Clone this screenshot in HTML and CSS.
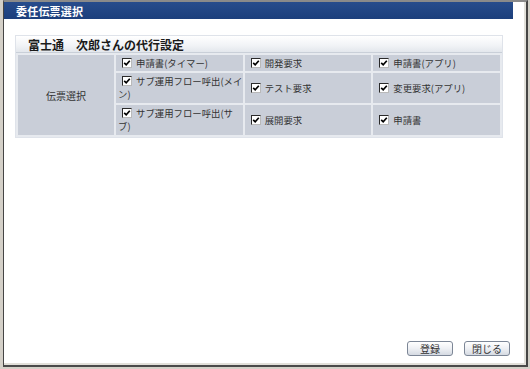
FILE: index.html
```html
<!DOCTYPE html>
<html lang="ja">
<head>
  <meta charset="UTF-8">
  <title>委任伝票選択</title>
  <link rel="stylesheet" href="styles.css">
</head>
<body>
  <div class="window">
    <!-- Title Bar -->
    <div class="title-bar">委任伝票選択</div>

    <!-- Main Content -->
    <div class="content">
      <div class="panel">
        <div class="panel-head">富士通　次郎さんの代行設定</div>
        <table class="slip-table">
          <tr class="row-short">
            <td class="label" rowspan="3">伝票選択</td>
            <td><input type="checkbox" checked>申請書(タイマー)</td>
            <td><input type="checkbox" checked>開発要求</td>
            <td><input type="checkbox" checked>申請書(アプリ)</td>
          </tr>
          <tr class="row-tall">
            <td><input type="checkbox" checked>サブ運用フロー呼出(メイ<br>ン)</td>
            <td><input type="checkbox" checked>テスト要求</td>
            <td><input type="checkbox" checked>変更要求(アプリ)</td>
          </tr>
          <tr class="row-tall">
            <td><input type="checkbox" checked>サブ運用フロー呼出(サ<br>ブ)</td>
            <td><input type="checkbox" checked>展開要求</td>
            <td><input type="checkbox" checked>申請書</td>
          </tr>
        </table>
      </div>
    </div>

    <!-- Buttons -->
    <div class="footer">
      <button class="btn">登録</button>
      <button class="btn">閉じる</button>
    </div>
  </div>
</body>
</html>
```

FILE: styles.css
```css
/* Basic Reset */
* {
    box-sizing: border-box;
    margin: 0;
    padding: 0;
}

body {
    width: 530px;
    height: 369px;
    padding: 0 2px 2px 3px;
    background-color: #d4d0c8;
    font-family: "Noto Sans CJK JP", "Noto Sans", sans-serif;
    color: #333;
    overflow: hidden;
}

/* Window frame */
.window {
    height: 100%;
    display: flex;
    flex-direction: column;
    background-color: #fff;
    border-top: 2px solid #8a8a8a;
    border-left: 1px solid #454545;
    border-right: 2px solid #454545;
    border-bottom: 2px solid #4a4a4a;
    box-shadow: inset -2px -2px 0 #e2e0da;
}

/* Title Bar */
.title-bar {
    height: 17px;
    margin-right: 13px;
    padding-left: 12px;
    background: linear-gradient(#274c8c, #1c3f7c);
    color: #fff;
    font-size: 11px;
    font-weight: bold;
    line-height: 18px;
    letter-spacing: 0.2px;
}

.content {
    flex: 1;
    padding: 16px 23px 0 11px;
}

/* Panel */
.panel {
    border: 1px solid #dfe3ea;
    background-color: #e7eaef;
}

.panel-head {
    height: 17px;
    padding-left: 12px;
    background: linear-gradient(#ffffff, #f1f3f6 60%, #e3e7ec);
    border-bottom: 1px solid #c9cfd8;
    color: #1a1a1a;
    font-size: 12px;
    font-weight: bold;
    line-height: 17px;
}

.slip-table {
    width: 100%;
    border-collapse: separate;
    border-spacing: 2px;
    table-layout: fixed;
    font-size: 9.4px;
    line-height: 13px;
}

.slip-table td {
    background-color: #c9ced8;
    padding: 0 2px;
    vertical-align: middle;
    white-space: nowrap;
}

.slip-table td.label {
    width: 96px;
    text-align: center;
    font-size: 10px;
}

.row-short td {
    height: 16px;
}

.row-tall td {
    height: 30px;
}

.slip-table input[type="checkbox"] {
    appearance: none;
    -webkit-appearance: none;
    width: 10px;
    height: 10px;
    margin: 0 4px;
    vertical-align: -1px;
    border: 1px solid #2a2a2a;
    border-right-color: #b9b9b9;
    border-bottom-color: #b9b9b9;
    background: #fff url("data:image/svg+xml,%3Csvg xmlns='http://www.w3.org/2000/svg' width='8' height='8'%3E%3Cpolyline points='1.2,3.8 3.2,5.8 6.8,1.8' fill='none' stroke='%23000' stroke-width='1.7'/%3E%3C/svg%3E") no-repeat center;
}

/* Footer buttons */
.footer {
    display: flex;
    justify-content: flex-end;
    gap: 11px;
    padding: 0 16px 9px 0;
}

.btn {
    width: 46px;
    height: 15px;
    border: 1px solid #7c8696;
    border-radius: 3px;
    background: linear-gradient(#ffffff, #eef0f4 50%, #d5dae2);
    color: #333;
    font-family: "Noto Sans CJK JP", sans-serif;
    font-size: 10px;
    line-height: 13px;
    cursor: pointer;
}
```
